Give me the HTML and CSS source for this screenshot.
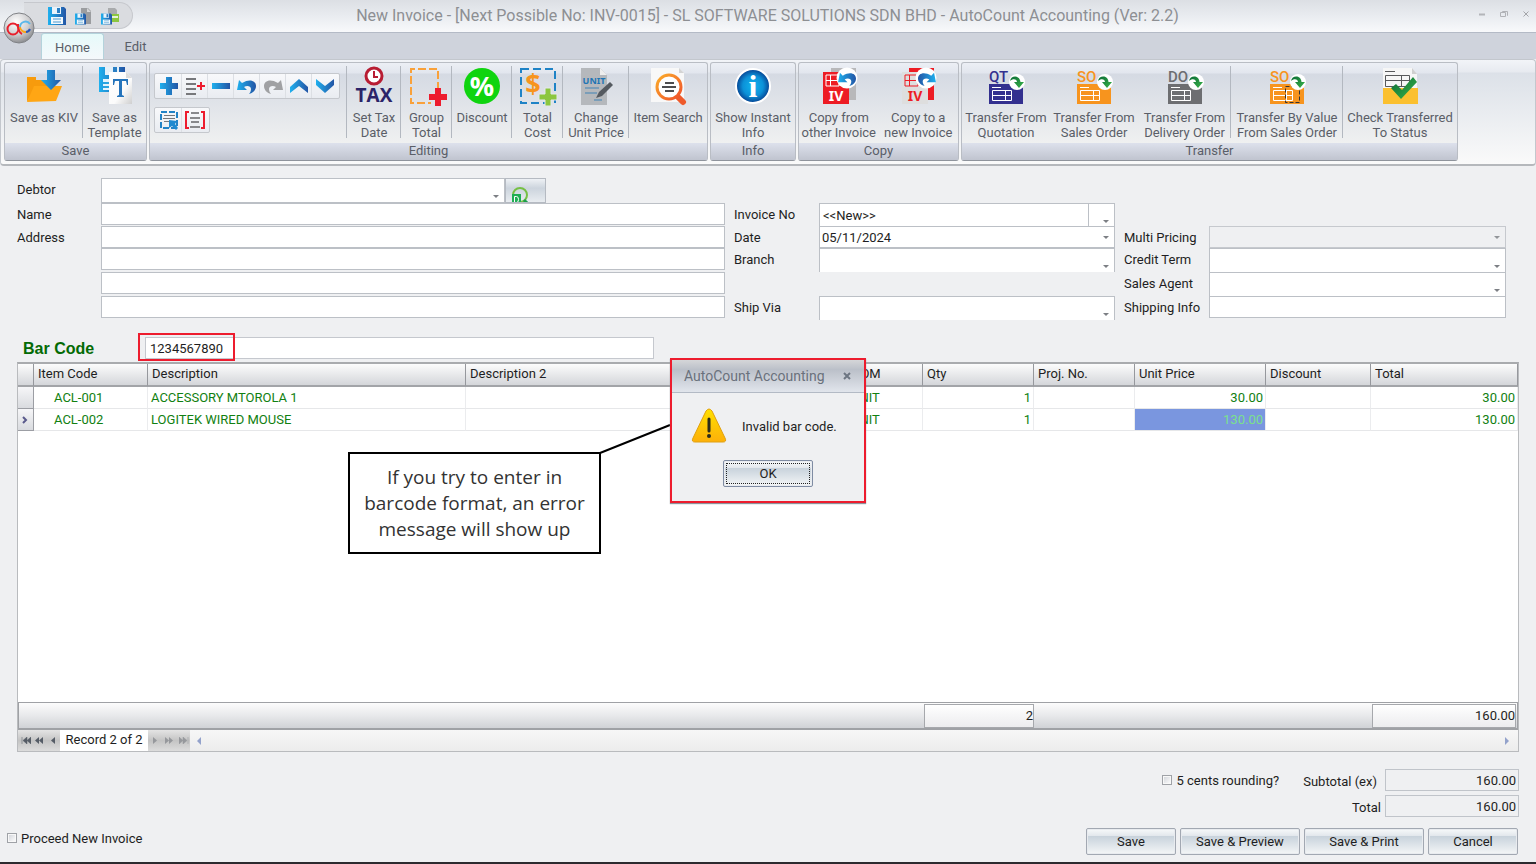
FILE: index.html
```html
<!DOCTYPE html>
<html lang="en">
<head>
<meta charset="UTF-8">
<meta name="viewport" content="width=device-width, initial-scale=1.0">
<title>New Invoice - AutoCount Accounting</title>
<link rel="stylesheet" href="styles.css">
</head>
<body>
<!-- shared gradients and shapes for the icons -->
<svg class="defs" width="0" height="0" aria-hidden="true">
    <defs>
        <linearGradient id="blue" x1="0" x2="1"><stop offset="0" stop-color="#1fb0ee"/><stop offset="1" stop-color="#2355a5"/></linearGradient>
        <linearGradient id="paper" x1="0" y1="0" x2="1" y2="1"><stop offset="0" stop-color="#fff"/><stop offset="0.6" stop-color="#fbfbfb"/><stop offset="1" stop-color="#cfcfcf"/></linearGradient>
        <linearGradient id="orange" x1="0" y1="0" x2="1" y2="1"><stop offset="0" stop-color="#fbad2a"/><stop offset="1" stop-color="#f0502a"/></linearGradient>
        <linearGradient id="green" x1="0" y1="0" x2="1" y2="1"><stop offset="0" stop-color="#0a6b35"/><stop offset="1" stop-color="#3bb54a"/></linearGradient>
        <radialGradient id="info"><stop offset="0" stop-color="#10b4ee"/><stop offset="0.6" stop-color="#0b91d8"/><stop offset="1" stop-color="#053f8f"/></radialGradient>
        <radialGradient id="orb" cx="0.4" cy="0.3" r="0.7"><stop offset="0" stop-color="#fff"/><stop offset="0.6" stop-color="#cfcfd1"/><stop offset="1" stop-color="#8e8f92"/></radialGradient>
        <linearGradient id="warn" x1="0" y1="0" x2="0" y2="1"><stop offset="0" stop-color="#ffe000"/><stop offset="1" stop-color="#fdb00a"/></linearGradient>
        <symbol id="floppy" viewBox="0 0 18 18"><path d="M0 0h16l2 2v16H0z" fill="url(#blue)"/><path d="M4 0h9v7H4z" fill="#e8f3fb"/><path d="M9 1h3v5H9z" fill="#2a7fc4"/><path d="M3 10h12v7H3z" fill="#f2f8fc"/><path d="M5 12h8M5 15h8" stroke="#4a9ad2"/></symbol>
        <symbol id="form" viewBox="0 0 34 20"><path d="M0 0h34v20H0z" fill="currentColor"/><path d="M3 3.500h9" stroke="#fff"/><path d="M3.500 6.500h19v10h-19zM3 11.500h20M16.500 7v10" stroke="#fff" fill="none"/></symbol>
        <symbol id="turn" viewBox="0 0 16 16"><circle cx="8" cy="8" r="8" fill="#fff"/><path d="M1 7C2 1 11 1 11.500 8H15l-5 6-5-6h3C8 5 4 4 1 7z" fill="url(#green)"/></symbol>
        <symbol id="undo" viewBox="0 0 20 18"><path d="M2 3L0 13l10 0-3-3c3-2 7-1 7 2 0 2-1 4-2 5 4-1 7-4 7-8C19 4 13 1 5 6z"/></symbol>
    </defs>
</svg>

<div class="window">
    <header class="titlebar">
        <div class="quick">
            <button class="quickBtn" aria-label="Save"><svg width="18" height="18"><use href="#floppy"/></svg></button>
            <button class="quickBtn" aria-label="Save and preview"><svg width="18" height="18" viewBox="0 0 18 18"><path d="M7 1h7l3 3v13H7z" fill="#9b9da0"/><path d="M13 1v4h4" fill="#d4d5d7"/><use href="#floppy" x="1" y="6" width="11" height="12"/></svg></button>
            <button class="quickBtn" aria-label="Save and print"><svg width="20" height="18" viewBox="0 0 20 18"><path d="M8 1h7l2 2v5H8z" fill="#a9abad"/><path d="M9 7h10v8H9z" fill="#8cc63f"/><path d="M12 9h6v2h-6z" fill="#e6f3d4"/><use href="#floppy" x="1" y="6" width="11" height="12"/></svg></button>
        </div>
        <button class="orb" aria-label="Application menu">
            <svg width="32" height="32" viewBox="0 0 32 32"><circle cx="16" cy="16" r="15" fill="url(#orb)" stroke="#808286"/><circle cx="10" cy="17" r="5.500" fill="none" stroke="#e8202c" stroke-width="2"/><path d="M15 12q0 8 4 10" fill="none" stroke="#e8202c" stroke-width="2"/><path d="M27 12a5.500 5.500 0 0 0-10 3" fill="none" stroke="#5bb8ea" stroke-width="2"/><path d="M17 15a5.500 5.500 0 0 0 6 5" fill="none" stroke="#f9a51a" stroke-width="2"/><path d="M23 20a5 5 0 0 0 4-3" fill="none" stroke="#2a55b5" stroke-width="2"/></svg>
        </button>
        <h1 class="title">New Invoice - [Next Possible No: INV-0015] - SL SOFTWARE SOLUTIONS SDN BHD - AutoCount Accounting (Ver: 2.2)</h1>
        <div class="winButtons">
            <button aria-label="Minimize"><svg width="8" height="8"><path d="M1 4.500h6" stroke="#b3b5b9" stroke-width="2"/></svg></button>
            <button aria-label="Restore"><svg width="8" height="8"><path d="M2.500 2V1.500h5v4H7M.5 2.500h5v4h-5z" stroke="#b0b2b6" fill="none"/></svg></button>
            <button aria-label="Close"><svg width="8" height="8"><path d="M1.500 1.500l5 5M6.500 1.500l-5 5" stroke="#a3a5a9"/></svg></button>
        </div>
    </header>

    <nav class="tabs">
        <button class="tab active">Home</button>
        <button class="tab">Edit</button>
    </nav>

    <div class="ribbon">
        <section class="group saveGroup">
            <div class="items">
                <button class="item kiv">
                    <svg width="40" height="40" viewBox="0 0 40 40"><path d="M3 36V11h9v3h19v6H12z" fill="#f79b0d"/><path d="M3 36l7-16h28l-6 15z" fill="#ffa614"/><path d="M23 4h8v10h6L27 24 17 14h6z" fill="url(#blue)"/></svg>
                    <span>Save as KIV</span>
                </button>
                <button class="item template">
                    <svg width="40" height="40" viewBox="0 0 40 40"><path d="M4 1h26v25H4z" fill="url(#blue)"/><path d="M10 1h14v8H10z" fill="#e4f1fa"/><path d="M18 1h4v7h-4z" fill="#2a7fc4"/><path d="M8 13h12v11H8z" fill="#e4f4fc"/><path d="M8 17h8M8 21h8" stroke="#29a4e0" stroke-width="2"/><path d="M14 6h17l6 6v26H14z" fill="url(#paper)"/><path d="M31 6v6h6" fill="#dcdcdc"/><path d="M18 13h15v6h-1l-1-4h-4v14l2 1v1h-7v-1l2-1V15h-4l-1 4h-1z" fill="#2574bb"/></svg>
                    <span>Save as<br>Template</span>
                </button>
            </div>
            <h2 class="groupName">Save</h2>
        </section>

        <section class="group editGroup">
            <div class="items">
                <div class="tools">
                    <div class="toolRow">
                        <button aria-label="Add row"><svg width="20" height="20"><path d="M7 1h6v6h6v6h-6v6H7v-6H1V7h6z" fill="url(#blue)"/></svg></button>
                        <button aria-label="Insert row"><svg width="20" height="20"><path d="M1 3h10M1 8h10M1 13h10M1 18h10" stroke="#77787b" stroke-width="2"/><path d="M12 10h8M16 6v8" stroke="#ed1c2e" stroke-width="2"/></svg></button>
                        <button aria-label="Delete row"><svg width="20" height="20"><path d="M1 7h18v6H1z" fill="url(#blue)"/></svg></button>
                        <button aria-label="Undo"><svg width="20" height="20"><use href="#undo" y="1" width="20" height="18" fill="url(#blue)"/></svg></button>
                        <button aria-label="Redo"><svg width="20" height="20"><use href="#undo" y="1" width="20" height="18" fill="#a0a1a3" transform="matrix(-1 0 0 1 20 0)"/></svg></button>
                        <button aria-label="Move up"><svg width="20" height="20"><path d="M1 11l9-8 9 8v6l-9-7-9 7z" fill="url(#blue)"/></svg></button>
                        <button aria-label="Move down"><svg width="20" height="20"><path d="M1 3l9 7 9-7v6l-9 8-9-8z" fill="url(#blue)"/></svg></button>
                    </div>
                    <div class="toolRow">
                        <button aria-label="Select all"><svg width="20" height="20"><path d="M2 2h16v16H2z" fill="none" stroke="#2383c6" stroke-width="2" stroke-dasharray="6 2"/><path d="M5 5.500h11M4 8.500h12M5 11.500h5" stroke="#77787b"/><path d="M10 10l8 1-2 3 3 4-2 2-4-4-3 2z" fill="#1e8ad0"/></svg></button>
                        <button aria-label="Range set"><svg width="20" height="20"><path d="M4 2H1v16h3M16 2h3v16h-3" fill="none" stroke="#ed1c2e" stroke-width="2"/><path d="M6 3h8M5 8h10M6 12h8M5 17h10" stroke="#88898c" stroke-width="2"/></svg></button>
                    </div>
                </div>
                <button class="item tax">
                    <svg width="44" height="40" viewBox="0 0 44 40"><circle cx="22" cy="10" r="8" fill="#fff" stroke="#b81d33" stroke-width="3"/><path d="M22 5v6h4" fill="none" stroke="#b81d33" stroke-width="2"/><text x="22" y="36" class="taxText">TAX</text></svg>
                    <span>Set Tax<br>Date</span>
                </button>
                <button class="item groupTotal">
                    <svg width="40" height="40" viewBox="0 0 40 40"><path d="M31 24V3H4v34h20" fill="none" stroke="#f9a13a" stroke-width="2" stroke-dasharray="8 3"/><path d="M28 22h6v6h6v6h-6v6h-6v-6h-6v-6h6z" fill="#ed1c2e"/></svg>
                    <span>Group<br>Total</span>
                </button>
                <button class="item discount">
                    <svg width="40" height="40" viewBox="0 0 40 40"><circle cx="20" cy="20" r="18" fill="#0fd40f"/><text x="20" y="30" class="percent">%</text></svg>
                    <span>Discount</span>
                </button>
                <button class="item totalCost">
                    <svg width="40" height="40" viewBox="0 0 40 40"><path d="M3 3h34v34H3z" fill="none" stroke="#1f83c6" stroke-width="2" stroke-dasharray="8 4"/><text x="15" y="28" class="dollar">$</text><path d="M27 22h6v6h6v6h-6v6h-6v-6h-6v-6h6z" fill="#8cc63f" stroke="#e4e8ee"/></svg>
                    <span>Total<br>Cost</span>
                </button>
                <button class="item unitPrice">
                    <svg width="40" height="40" viewBox="0 0 40 40"><path d="M5 2h19l7 7v30H5z" fill="#b5b8bc"/><path d="M24 2v7h7" fill="#eee"/><text x="18" y="18" class="unit">UNIT</text><path d="M9 22h14M9 27h12M18 34h8" stroke="#4183b5"/><path d="M20 32l3-6 11-10 3 3-11 11z" fill="#555a60"/></svg>
                    <span>Change<br>Unit Price</span>
                </button>
                <button class="item search">
                    <svg width="40" height="40" viewBox="0 0 40 40"><path d="M3 2h28l5 5v29H3z" fill="#f8f8f8"/><path d="M31 2v5h5" fill="#d4d4d4"/><path d="M28 29l7 7" stroke="#ee5a2b" stroke-width="6" stroke-linecap="round"/><circle cx="21" cy="21" r="12" fill="#fff" stroke="url(#orange)" stroke-width="3"/><path d="M17 17h9M14 21h14M17 25h9" stroke="#4d4d4f" stroke-width="2"/></svg>
                    <span>Item Search</span>
                </button>
            </div>
            <h2 class="groupName">Editing</h2>
        </section>

        <section class="group infoGroup">
            <div class="items">
                <button class="item instant">
                    <svg width="40" height="40" viewBox="0 0 40 40"><circle cx="20" cy="20" r="17" fill="url(#info)" stroke="#fff" stroke-width="2"/><text x="20" y="31" class="infoLetter">i</text></svg>
                    <span>Show Instant<br>Info</span>
                </button>
            </div>
            <h2 class="groupName">Info</h2>
        </section>

        <section class="group copyGroup">
            <div class="items">
                <button class="item copyFrom">
                    <svg width="40" height="40" viewBox="0 0 40 40"><path d="M12 2h25v32H12z" fill="#b8b8ba"/><path d="M4 6h26v32H4z" fill="#ed1c24"/><path d="M7 9h13v11H7zM7 14.500h13M11.500 9v11" fill="none" stroke="#fff"/><text x="17" y="35" class="iv">IV</text><circle cx="28" cy="12" r="10.500" fill="#fff"/><use href="#undo" x="19" y="4" width="19" height="17" fill="url(#blue)"/></svg>
                    <span>Copy from<br>other Invoice</span>
                </button>
                <button class="item copyTo">
                    <svg width="40" height="40" viewBox="0 0 40 40"><path d="M11 2h25v32H11z" fill="#ed1c24"/><path d="M4 6h26v32H4z" fill="#dedede"/><path d="M7 9h13v11H7zM7 14.500h13M11.500 9v11" fill="none" stroke="#ed1c24"/><text x="17" y="35" class="iv red">IV</text><circle cx="28" cy="12" r="10.500" fill="#fff"/><use href="#undo" width="19" height="17" fill="url(#blue)" transform="matrix(-1 0 0 1 38 4)"/></svg>
                    <span>Copy to a<br>new Invoice</span>
                </button>
            </div>
            <h2 class="groupName">Copy</h2>
        </section>

        <section class="group transferGroup">
            <div class="items">
                <button class="item quotation">
                    <svg class="qt" width="40" height="40" viewBox="0 0 40 40"><text x="3" y="16" class="docType">QT</text><use href="#form" x="3" y="18" width="34" height="20"/><use href="#turn" x="23" y="8" width="16" height="16"/></svg>
                    <span>Transfer From<br>Quotation</span>
                </button>
                <button class="item salesOrder">
                    <svg class="so" width="40" height="40" viewBox="0 0 40 40"><text x="3" y="16" class="docType">SO</text><use href="#form" x="3" y="18" width="34" height="20"/><use href="#turn" x="23" y="8" width="16" height="16"/></svg>
                    <span>Transfer From<br>Sales Order</span>
                </button>
                <button class="item deliveryOrder">
                    <svg class="do" width="40" height="40" viewBox="0 0 40 40"><text x="3" y="16" class="docType">DO</text><use href="#form" x="3" y="18" width="34" height="20"/><use href="#turn" x="23" y="8" width="16" height="16"/></svg>
                    <span>Transfer From<br>Delivery Order</span>
                </button>
                <button class="item byValue">
                    <svg class="so" width="40" height="40" viewBox="0 0 40 40"><text x="3" y="16" class="docType">SO</text><use href="#form" x="3" y="18" width="34" height="20"/><path d="M18.500 20.500h14v16h-14z" fill="none" stroke="#333" stroke-dasharray="4 2"/><use href="#turn" x="23" y="8" width="16" height="16"/></svg>
                    <span>Transfer By Value<br>From Sales Order</span>
                </button>
                <button class="item check">
                    <svg width="40" height="40" viewBox="0 0 40 40"><path d="M3 2h29l5 6v14H3z" fill="#f6f6f6"/><path d="M32 2v6h5" fill="#cfcfcf"/><path d="M5 5.500h10" stroke="#58595b"/><path d="M5.500 9.500h24v11h-24zM6 14.500h23M21.500 9v11" fill="none" stroke="#58595b"/><path d="M3 22h35v16H3z" fill="#fbc02f"/><path d="M11 22l5-4 6 6 11-13 4 5-16 17z" fill="url(#green)"/></svg>
                    <span>Check Transferred<br>To Status</span>
                </button>
            </div>
            <h2 class="groupName">Transfer</h2>
        </section>
    </div>

    <main class="content">
        <form class="invoiceForm">
            <label class="r1 c1" for="debtor">Debtor</label>
            <div class="r1 c2 debtorBox">
                <span class="combo low"><select id="debtor"><option></option></select></span>
                <button type="button" class="lookup" aria-label="Find debtor"><svg width="18" height="18"><circle cx="9" cy="8" r="7" fill="none" stroke="#76c043" stroke-width="2"/><path d="M13 13l4 4" stroke="#1b9e4b" stroke-width="3"/><path d="M1 7h9v10H1z" fill="#1fae54"/><path d="M3.500 9.500h2q2 0 2 3t-2 3h-2z" fill="none" stroke="#fff"/></svg></button>
            </div>
            <label class="r2 c1" for="name">Name</label>
            <input class="r2 c2" id="name" type="text">
            <label class="r3 c1" for="address1">Address</label>
            <input class="r3 c2" id="address1" type="text">
            <input class="r4 c2" type="text" aria-label="Address line 2">
            <input class="r5 c2" type="text" aria-label="Address line 3">
            <input class="r6 c2" type="text" aria-label="Address line 4">

            <label class="r2 c3" for="invoiceNo">Invoice No</label>
            <div class="r2 c4 numberBox">
                <input id="invoiceNo" type="text" value="&lt;&lt;New&gt;&gt;">
                <span class="combo low"><select aria-label="Numbering format"><option></option></select></span>
            </div>
            <label class="r3 c3" for="date">Date</label>
            <span class="r3 c4 combo"><select id="date"><option>05/11/2024</option></select></span>
            <label class="r4 c3" for="branch">Branch</label>
            <span class="r4 c4 combo low cut"><select id="branch"><option></option></select></span>
            <label class="r6 c3" for="shipVia">Ship Via</label>
            <span class="r6 c4 combo low cut"><select id="shipVia"><option></option></select></span>

            <label class="r3 c5" for="pricing">Multi Pricing</label>
            <span class="r3 c6 combo off"><select id="pricing" disabled><option></option></select></span>
            <label class="r4 c5" for="term">Credit Term</label>
            <span class="r4 c6 combo low"><select id="term"><option></option></select></span>
            <label class="r5 c5" for="agent">Sales Agent</label>
            <span class="r5 c6 combo low"><select id="agent"><option></option></select></span>
            <label class="r6 c5" for="shipInfo">Shipping Info</label>
            <input class="r6 c6" id="shipInfo" type="text">
        </form>

        <div class="barcode">
            <label for="barcode">Bar Code</label>
            <div class="barcodeBox">
                <input id="barcode" type="text" value="1234567890">
                <span class="highlight"></span>
            </div>
        </div>

        <div class="grid">
            <table class="lines">
                <colgroup>
                    <col class="colMark"><col class="colCode"><col class="colDesc"><col><col class="colUom"><col class="colQty"><col class="colProj"><col class="colPrice"><col class="colDisc"><col class="colTotal">
                </colgroup>
                <thead>
                    <tr><th></th><th>Item Code</th><th>Description</th><th>Description 2</th><th>UOM</th><th>Qty</th><th>Proj. No.</th><th>Unit Price</th><th>Discount</th><th>Total</th></tr>
                </thead>
                <tbody>
                    <tr><td class="mark"></td><td class="code">ACL-001</td><td>ACCESSORY MTOROLA 1</td><td></td><td>UNIT</td><td class="num">1</td><td></td><td class="num">30.00</td><td></td><td class="num">30.00</td></tr>
                    <tr><td class="mark"><svg width="6" height="8"><path d="M1 1l3 3-3 3" fill="none" stroke="#5a5a8c" stroke-width="2"/></svg></td><td class="code">ACL-002</td><td>LOGITEK WIRED MOUSE</td><td></td><td>UNIT</td><td class="num">1</td><td></td><td class="num selected">130.00</td><td></td><td class="num">130.00</td></tr>
                </tbody>
            </table>
            <div class="summary">
                <output class="sumQty">2</output>
                <output class="sumTotal">160.00</output>
            </div>
            <div class="navigator">
                <button aria-label="First"><svg width="10" height="7"><path d="M1 0v7M6 0L2 3.500 6 7zM10 0L6 3.500 10 7z" stroke="#555c66" fill="#555c66" stroke-width=".5"/></svg></button>
                <button aria-label="Previous page"><svg width="8" height="7"><path d="M4 0L0 3.500 4 7zM8 0L4 3.500 8 7z" fill="#555c66"/></svg></button>
                <button aria-label="Previous"><svg width="8" height="7"><path d="M6 0L2 3.500 6 7z" fill="#555c66"/></svg></button>
                <span class="record">Record 2 of 2</span>
                <button aria-label="Next"><svg width="8" height="7"><path d="M2 0l4 3.500L2 7z" fill="#96989c"/></svg></button>
                <button aria-label="Next page"><svg width="8" height="7"><path d="M0 0l4 3.500L0 7zM4 0l4 3.500L4 7z" fill="#96989c"/></svg></button>
                <button aria-label="Last"><svg width="10" height="7"><path d="M9 0v7M0 0l4 3.500L0 7zM4 0l4 3.500L4 7z" stroke="#96989c" fill="#96989c" stroke-width=".5"/></svg></button>
                <div class="scroll">
                    <svg width="6" height="8"><path d="M5 0L1 4l4 4z" fill="#93a2cb"/></svg>
                    <svg width="6" height="8"><path d="M1 0l4 4-4 4z" fill="#93a2cb"/></svg>
                </div>
            </div>
        </div>

        <div class="totals">
            <label class="tick"><input type="checkbox">5 cents rounding?</label>
            <label class="sumLabel" for="subtotal">Subtotal (ex)</label>
            <input class="sumField" id="subtotal" type="text" value="160.00" readonly>
            <label class="sumLabel total" for="total">Total</label>
            <input class="sumField total" id="total" type="text" value="160.00" readonly>
        </div>

        <div class="callout">If you try to enter in barcode format, an error message will show up
            <svg class="pointer" width="72" height="30"><path d="M1 29L71 1" stroke="#000" stroke-width="2"/></svg>
        </div>

        <div class="message" role="dialog" aria-labelledby="messageTitle">
            <div class="messageHead">
                <span id="messageTitle">AutoCount Accounting</span>
                <button aria-label="Close message"><svg width="8" height="8"><path d="M1 1l6 6M7 1L1 7" stroke="#6d7682" stroke-width="2"/></svg></button>
            </div>
            <div class="messageBody">
                <svg width="36" height="36" viewBox="0 0 36 36"><path d="M15 3q3-4 6 0l13 27q2 4-2 4H4q-4 0-2-4z" fill="url(#warn)" stroke="#e0a010"/><path d="M18 11v12" stroke="#2b2b1a" stroke-width="3" stroke-linecap="round"/><circle cx="18" cy="28" r="2" fill="#2b2b1a"/></svg>
                <span>Invalid bar code.</span>
            </div>
            <button class="btn ok">OK</button>
        </div>
    </main>

    <footer class="actions">
        <label class="tick"><input type="checkbox">Proceed New Invoice</label>
        <div class="actionButtons">
            <button class="btn">Save</button>
            <button class="btn wide">Save &amp; Preview</button>
            <button class="btn wide">Save &amp; Print</button>
            <button class="btn">Cancel</button>
        </div>
    </footer>
</div>
</body>
</html>
```

FILE: styles.css
```css
* {
    box-sizing: border-box;
}
body {
    margin: 0;
    background-color: #eff0f2;
    color: #1e1e22;
    font-family: Roboto, "Noto Sans", sans-serif;
    font-size: 13px;
    line-height: 15px;
}
button, input, select {
    margin: 0;
    padding: 0;
    border: none;
    background: none;
    color: inherit;
    font: inherit;
}
h1, h2 {
    margin: 0;
    font-weight: normal;
}
svg {
    display: block;
    flex: none;
}
.defs {
    position: absolute;
}
.window {
    display: flex;
    flex-direction: column;
    min-height: 100vh;
    border-bottom: 2px solid #2c2a2e;
}

/* title bar */
.titlebar {
    position: relative;
    display: flex;
    align-items: flex-start;
    height: 33px;
    background: linear-gradient(#dcdfe4, #e9ecf0 50%, #f8f9fb);
    border-bottom: 1px solid #b4bac6;
}
.quick {
    display: flex;
    align-items: center;
    gap: 8px;
    width: 109px;
    height: 27px;
    margin: 2px 0 0 24px;
    padding-left: 24px;
    background-color: #dadce0;
    border: 1px solid #c6c8cd;
    border-left: none;
    border-radius: 0 14px 14px 0;
}
.orb {
    position: absolute;
    z-index: 2;
    left: 3px;
    top: 12px;
}
.title {
    flex: 1;
    padding-right: 76px;
    text-align: center;
    font-size: 16px;
    line-height: 32px;
    color: #8d8f93;
}
.winButtons {
    display: flex;
    gap: 14px;
    padding: 10px 6px 0 0;
}

/* ribbon */
.tabs {
    display: flex;
    height: 26px;
    padding-left: 41px;
    background-color: #cfd3dc;
}
.tab {
    width: 63px;
    font-size: 13px;
    color: #5a5e68;
}
.tab.active {
    margin-bottom: -1px;
    background: linear-gradient(#e6fafa, #f5f8fb);
    border: 1px solid #b4d3dc;
    border-bottom: none;
    border-radius: 3px 3px 0 0;
}
.ribbon {
    display: flex;
    gap: 2px;
    height: 107px;
    padding: 2px 3px;
    background: linear-gradient(#f2f4f8, #e7eaf0 12px, #dce1e8 13px, #fafafa);
    border: 1px solid #c3c7cd;
    border-bottom: 2px solid #b5b8bc;
    border-radius: 4px;
}
.group {
    display: flex;
    flex-direction: column;
    height: 99px;
    background: linear-gradient(#eceff5, #e2e6ee 10px, #d5dae3 11px, #f0f1f1 82px);
    border: 1px solid #b9bdc4;
    border-bottom-color: #8f949c;
    border-radius: 3px;
}
.saveGroup {
    width: 143px;
}
.editGroup {
    width: 559px;
}
.infoGroup {
    width: 86px;
}
.copyGroup {
    width: 161px;
}
.transferGroup {
    width: 497px;
}
.items {
    display: flex;
    flex: 1;
}
.groupName {
    height: 17px;
    font-size: 13px;
    line-height: 16px;
    text-align: center;
    color: #5a5e68;
    background: linear-gradient(#dde1ec, #c0c4cf);
}
.item {
    flex: 1;
    height: 80px;
    text-align: center;
    white-space: nowrap;
    color: #5a5e68;
}
.item svg {
    margin: 0 auto 4px;
}
.item span {
    display: block;
    height: 30px;
}
.kiv, .tools, .tax, .groupTotal, .discount, .totalCost, .unitPrice, .deliveryOrder, .byValue {
    background: linear-gradient(#b3b8c0, #b3b8c0) right 3px / 1px 72px no-repeat;
}
.kiv {
    flex: 0 0 78px;
}
.tools {
    flex: 0 0 197px;
    padding: 10px 0 0 4px;
}
.toolRow {
    display: flex;
    width: max-content;
    margin-bottom: 8px;
    padding: 0 1px;
    border: 1px solid #c5c8cd;
    border-radius: 2px;
    background: linear-gradient(#f8f9fb, #e9ecf1);
}
.toolRow button {
    width: 26px;
    height: 24px;
    padding: 2px 3px;
    border-right: 1px solid #dcdfe4;
}
.toolRow button:last-child {
    border-right: none;
}
.tax {
    flex: 0 0 54px;
}
.groupTotal, .totalCost {
    flex: 0 0 51px;
}
.discount {
    flex: 0 0 60px;
}
.unitPrice {
    flex: 0 0 66px;
}
.quotation, .salesOrder {
    flex: 0 0 88px;
}
.deliveryOrder {
    flex: 0 0 93px;
}
.byValue {
    flex: 0 0 112px;
}
.taxText, .percent, .dollar, .unit, .iv, .infoLetter {
    text-anchor: middle;
    font-family: "Noto Sans", sans-serif;
    font-weight: bold;
}
.taxText {
    font-family: "Open Sans", sans-serif;
    font-size: 19px;
    fill: #2b2468;
}
.percent {
    font-size: 27px;
    fill: #fff;
}
.dollar {
    font-size: 27px;
    fill: #f7941e;
}
.unit {
    font-size: 9px;
    fill: #1f75b5;
}
.infoLetter {
    font-family: "Liberation Serif", serif;
    font-size: 32px;
    fill: #fff;
}
.iv {
    font-size: 14px;
    fill: #fff;
}
.red {
    fill: #ed1c24;
}
.docType {
    font-size: 15px;
    font-weight: 500;
    fill: currentColor;
}
.qt {
    color: #33308f;
}
.so {
    color: #f7941e;
}
.do {
    color: #6d6e71;
}

/* invoice header */
.content {
    position: relative;
    display: flex;
    flex-direction: column;
    flex: 1;
    padding: 12px 17px 0;
}
.invoiceForm {
    display: grid;
    grid-template-columns: 84px 624fr 94px 296fr 94px 297fr;
    grid-template-rows: 25px 23px 22px 24px 24px 24px;
    padding-right: 13px;
}
.invoiceForm label {
    line-height: 24px;
}
.invoiceForm input, .combo {
    height: 22px;
    border: 1px solid #bcc0c6;
    background-color: #fff;
}
.invoiceForm input {
    min-width: 0;
    padding: 0 3px;
}
.r1 { grid-row: 1; }
.r2 { grid-row: 2; }
.r3 { grid-row: 3; }
.r4 { grid-row: 4; }
.r5 { grid-row: 5; }
.r6 { grid-row: 6; }
.c1 { grid-column: 1; }
.c2 { grid-column: 2; }
.c3 { grid-column: 3; }
.c4 { grid-column: 4; }
.c5 { grid-column: 5; }
.c6 { grid-column: 6; }
.c3, .c5 {
    padding-left: 9px;
}
.combo {
    position: relative;
    display: block;
}
.combo select {
    appearance: none;
    display: block;
    width: 100%;
    height: 20px;
    padding-left: 2px;
}
.combo::after {
    content: "";
    position: absolute;
    right: 5px;
    top: 9px;
    border: 3px solid transparent;
    border-top-color: #7c7f84;
    border-bottom: none;
}
.combo.low {
    height: 25px;
}
.combo.low::after {
    top: 16px;
}
.combo.cut {
    height: 24px;
    border-bottom: none;
}
.combo.off {
    background-color: #eff0f2;
    opacity: 0.8;
}
.debtorBox, .numberBox {
    display: flex;
}
.debtorBox .combo {
    flex: 0 0 404px;
}
.lookup {
    width: 41px;
    height: 25px;
    padding: 8px 0 0 5px;
    overflow: hidden;
    border: 1px solid #b5bac2;
    background: linear-gradient(#eef1f5, #ccd4dd 40%, #e8ecf0);
}
.numberBox input {
    flex: 1;
    height: 24px;
}
.numberBox .combo {
    width: 26px;
    height: 24px;
    border-left: none;
}

/* bar code */
.barcode {
    display: flex;
    align-items: center;
    height: 22px;
    margin: 17px 0 3px;
    padding-left: 6px;
}
.barcode label {
    width: 122px;
    font-family: "Liberation Sans", sans-serif;
    font-size: 16px;
    font-weight: bold;
    color: #046a04;
}
.barcodeBox {
    position: relative;
    width: 509px;
}
.barcodeBox input {
    display: block;
    width: 100%;
    height: 22px;
    padding: 0 4px;
    border: 1px solid #c5c8ce;
    background-color: #fff;
}
.highlight {
    position: absolute;
    left: -7px;
    top: -4px;
    width: 97px;
    height: 28px;
    border: 2px solid #ed1c2e;
}

/* invoice lines */
.grid {
    display: flex;
    flex-direction: column;
    flex: 1;
    border: 1px solid #b9bbbe;
    border-top: 2px solid #a9abae;
    background-color: #fff;
}
.lines {
    width: 100%;
    table-layout: fixed;
    border-collapse: separate;
    border-spacing: 0;
}
.lines th {
    height: 23px;
    padding: 0 4px 2px;
    text-align: left;
    font-weight: normal;
    background: linear-gradient(#fcfcfc, #e8e9eb 50%, #d4d6da);
    border-right: 1px solid #96989d;
    border-bottom: 2px solid #a2a4a8;
}
.lines td {
    height: 22px;
    padding: 0 3px;
    color: #118011;
    border-right: 1px solid #ebecee;
    border-bottom: 1px solid #e6e7e9;
}
.lines .mark {
    padding: 0 4px;
    background: linear-gradient(#f6f6f8, #d9dbdf);
    border-color: #9c9ea4;
}
.lines .code {
    padding-left: 20px;
}
.lines .num {
    padding-right: 2px;
    text-align: right;
}
.lines .selected {
    background-color: #7a96df;
    color: #7be08c;
}
.colMark {
    width: 16px;
}
.colCode {
    width: 114px;
}
.colDesc {
    width: 318px;
}
.colUom {
    width: 75px;
}
.colQty {
    width: 111px;
}
.colProj {
    width: 101px;
}
.colPrice {
    width: 131px;
}
.colDisc {
    width: 105px;
}
.colTotal {
    width: 147px;
}
.summary {
    display: flex;
    justify-content: flex-end;
    gap: 338px;
    height: 28px;
    margin-top: auto;
    padding: 1px;
    background: linear-gradient(#fcfcfc, #e8e9eb 50%, #d0d2d6);
    border: 1px solid #9fa1a5;
    border-bottom-width: 2px;
}
.summary output {
    height: 24px;
    line-height: 22px;
    text-align: right;
    background: linear-gradient(#fff, #ececee);
    border: 1px solid #a6a8ac;
}
.sumQty {
    width: 110px;
}
.sumTotal {
    width: 144px;
}
.navigator {
    display: flex;
    height: 21px;
    background: linear-gradient(#e4e4e4, #c4c4c4 50%, #dcdcdc);
}
.navigator button {
    width: 14px;
    padding-left: 3px;
}
.record {
    width: 88px;
    text-align: center;
    line-height: 20px;
    background-color: #fff;
}
.scroll {
    display: flex;
    flex: 1;
    justify-content: space-between;
    align-items: center;
    padding: 0 8px 0 6px;
    background: linear-gradient(#f7f7f7, #ececec);
}

/* totals and buttons */
.totals {
    display: grid;
    grid-template-columns: 1fr auto 134px;
    grid-template-rows: 22px 22px;
    row-gap: 4px;
    padding: 17px 0 11px;
}
.totals .tick {
    justify-self: end;
}
.sumLabel {
    margin: 0 8px 0 24px;
    text-align: right;
    line-height: 26px;
}
.sumField {
    width: 134px;
    padding-right: 2px;
    text-align: right;
    border: 1px solid #c0c4ca;
}
.total {
    grid-row: 2;
}
.sumLabel.total {
    grid-column: 2;
    margin-right: 4px;
}
.sumField.total {
    grid-column: 3;
}
.tick {
    display: flex;
    align-items: center;
    gap: 4px;
    height: 22px;
}
.tick input {
    appearance: none;
    width: 10px;
    height: 10px;
    border: 1px solid #9fa2a7;
    background: linear-gradient(135deg, #cfd2d8, #fff);
    outline: 1px solid #f8f8f8;
    outline-offset: -2px;
}
.actions {
    display: flex;
    justify-content: space-between;
    height: 34px;
    padding: 0 18px 7px 7px;
}
.actions .tick {
    height: 20px;
}
.actionButtons {
    display: flex;
    gap: 4px;
}
.btn {
    width: 90px;
    height: 27px;
    border: 1px solid #a2a8b2;
    border-radius: 2px;
    background: linear-gradient(#f7f9fa, #e2e7ec 28%, #c9d3dc 30%, #f4f6f7);
    box-shadow: inset 0 0 0 1px #e8ebef;
}
.btn.wide {
    width: 120px;
}

/* note and error message */
.callout {
    position: absolute;
    left: 348px;
    top: 286px;
    width: 253px;
    height: 102px;
    padding: 10px;
    border: 2px solid #000;
    background-color: #fff;
    text-align: center;
    font-family: "Open Sans", "Noto Sans", sans-serif;
    font-size: 19px;
    line-height: 26px;
    color: #333;
}
.pointer {
    position: absolute;
    left: 249px;
    top: -30px;
}
.message {
    position: absolute;
    left: 50%;
    top: 192px;
    width: 196px;
    height: 145px;
    margin-left: -98px;
    border: 2px solid #ed1c2e;
    background-color: #eff0f2;
    box-shadow: 0 1px 1px #8c929c;
}
.messageHead {
    display: flex;
    justify-content: space-between;
    align-items: center;
    height: 33px;
    padding: 0 13px 0 12px;
    font-size: 14px;
    color: #6a717c;
    background: linear-gradient(#d5d6d8, #bbc0c9 30%, #e1e5ec);
    border-bottom: 1px solid #b3bac5;
}
.messageBody {
    display: flex;
    align-items: center;
    gap: 15px;
    padding: 15px 0 0 19px;
}
.ok {
    display: block;
    margin: 16px auto 0;
    border-color: #7f8ca3;
    outline: 1px dotted #222;
    outline-offset: -4px;
}
```
